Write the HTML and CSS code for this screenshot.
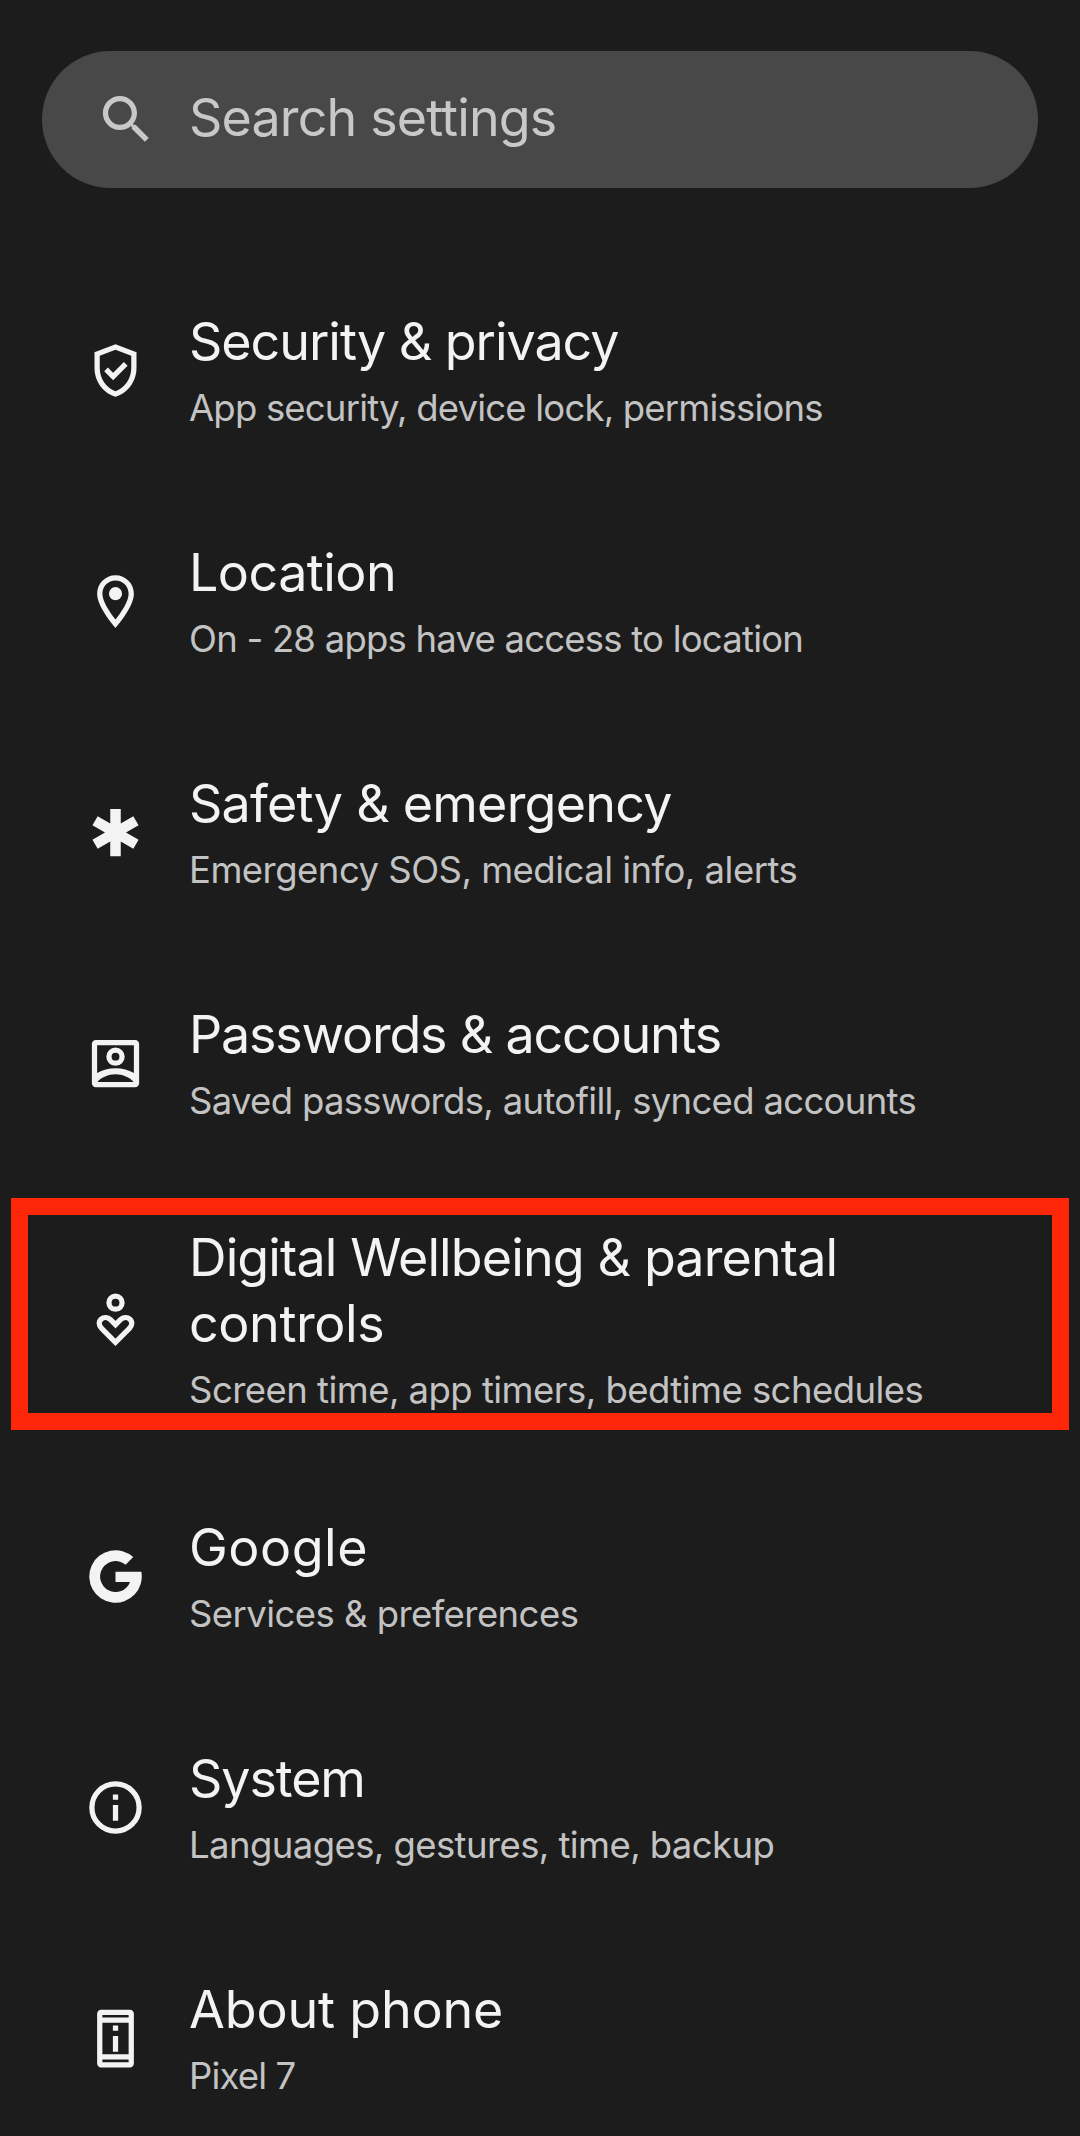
FILE: index.html
```html
<!DOCTYPE html>
<html lang="en">
<head>
<meta charset="utf-8">
<title>Settings</title>
<link rel="stylesheet" href="styles.css">
</head>
<body>
<main class="screen">
  <div class="search" role="search">
    <svg class="icon" viewBox="0 0 24 24"><path d="M15.5 14h-.79l-.28-.27C15.41 12.59 16 11.11 16 9.5 16 5.91 13.09 3 9.5 3S3 5.91 3 9.5 5.91 16 9.5 16c1.61 0 3.09-.59 4.23-1.57l.27.28v.79l5 4.99L20.49 19l-4.99-5zm-6 0C7.01 14 5 11.99 5 9.5S7.01 5 9.5 5 14 7.01 14 9.5 11.99 14 9.5 14z"/></svg>
    <span class="search-label">Search settings</span>
  </div>

  <ul class="list">
    <li class="row security">
      <svg class="icon" viewBox="0 0 24 24"><path d="M12 2L4 5v6.09c0 5.05 3.41 9.76 8 10.91 4.59-1.15 8-5.86 8-10.91V5l-8-3zm6 9.09c0 4-2.55 7.7-6 8.83-3.45-1.13-6-4.82-6-8.83v-4.7l6-2.25 6 2.25v4.7z"/><path class="line" d="M8.4 11.6l2.7 2.7 4.8-4.8"/></svg>
      <div class="text"><div class="title">Security &amp; privacy</div><div class="summary">App security, device lock, permissions</div></div>
    </li>
    <li class="row location">
      <svg class="icon" viewBox="0 0 24 24"><path d="M12 2C8.13 2 5 5.13 5 9c0 5.25 7 13 7 13s7-7.75 7-13c0-3.87-3.13-7-7-7zM7 9c0-2.76 2.24-5 5-5s5 2.24 5 5c0 2.88-2.88 7.19-5 9.88C9.92 16.21 7 11.85 7 9z"/><circle cx="12" cy="9" r="2.5"/></svg>
      <div class="text"><div class="title">Location</div><div class="summary">On - 28 apps have access to location</div></div>
    </li>
    <li class="row safety">
      <svg class="icon" viewBox="0 0 24 24"><path d="M20.79 9.23l-2-3.46L14 8.54V3h-4v5.54L5.21 5.77l-2 3.46L8 12l-4.79 2.77 2 3.46L10 15.46V21h4v-5.54l4.79 2.77 2-3.46L16 12z"/></svg>
      <div class="text"><div class="title">Safety &amp; emergency</div><div class="summary">Emergency SOS, medical info, alerts</div></div>
    </li>
    <li class="row passwords">
      <svg class="icon" viewBox="0 0 24 24"><path fill-rule="evenodd" d="M4.5 3h15c.83 0 1.5.67 1.5 1.5v15c0 .83-.67 1.5-1.5 1.5h-15c-.83 0-1.5-.67-1.5-1.5v-15C3 3.67 3.67 3 4.5 3zM5 5v10.6c2-1.1 4.4-1.8 7-1.8s5 .7 7 1.8V5zM5.1 19h13.800c-1.5-1.7-4.1-2.9-6.9-2.9s-5.4 1.2-6.9 2.9z"/><circle class="line" cx="12" cy="9.4" r="2.5"/></svg>
      <div class="text"><div class="title">Passwords &amp; accounts</div><div class="summary">Saved passwords, autofill, synced accounts</div></div>
    </li>
    <li class="row wellbeing">
      <svg class="icon" viewBox="0 0 24 24"><circle class="line" cx="12" cy="5.2" r="2.5"/><path class="line" d="M12 20.3L6.700 15C5.600 13.900 5.500 12.400 6.500 11.500c1-.9 2.600-.8 3.600.2L12 13.600l1.900-1.900c1-1 2.600-1.100 3.600-.2 1 .9.900 2.400-.2 3.500z"/></svg>
      <div class="text"><div class="title"><span class="title-lead">Digital Wellbeing &amp; parental</span> <span>controls</span></div><div class="summary">Screen time, app timers, bedtime schedules</div></div>
      <div class="highlight"></div>
    </li>
    <li class="row google">
      <svg class="icon" viewBox="0 0 24 24"><path d="M18.75 4.6A10 10 0 1 0 21.85 10.2H12V14.100H17.550A5.900 5.900 0 1 1 15.850 7.500z"/></svg>
      <div class="text"><div class="title">Google</div><div class="summary">Services &amp; preferences</div></div>
    </li>
    <li class="row system">
      <svg class="icon" viewBox="0 0 24 24"><path d="M11 7h2v2h-2zM11 11h2v6h-2z"/><circle class="line" cx="12" cy="12" r="9"/></svg>
      <div class="text"><div class="title">System</div><div class="summary">Languages, gestures, time, backup</div></div>
    </li>
    <li class="row about">
      <svg class="icon" viewBox="0 0 24 24"><path fill-rule="evenodd" d="M6.5 1h11c.83 0 1.5.67 1.5 1.5v19c0 .83-.67 1.5-1.5 1.5h-11C5.67 23 5 22.330 5 21.500v-19C5 1.670 5.670 1 6.500 1zM7 3v1h10V3zM7 6v12h10V6zM7 20v1h10v-1zM11 7h2v2h-2zM11 11h2v6h-2z"/></svg>
      <div class="text"><div class="title">About phone</div><div class="summary">Pixel 7</div></div>
    </li>
  </ul>
</main>
</body>
</html>
```
FILE: styles.css
```css
* { box-sizing: border-box; }

body {
  margin: 0;
  background: #1c1c1c;
  font-family: "Inter", "Liberation Sans", sans-serif;
}

.screen {
  height: 2136px;
  padding-top: 51px;
  overflow: hidden;
}

.search {
  display: flex;
  align-items: center;
  height: 137px;
  margin: 0 42px;
  padding-left: 53px;
  border-radius: 69px;
  background: #484848;
  color: #c8c8c8;
}

.search-label {
  margin-left: 31px;
  padding-bottom: 3px;
  font-size: 52px;
  line-height: 66px;
  letter-spacing: -0.86px;
}

.icon {
  flex: none;
  display: block;
  width: 63px;
  height: 63px;
  fill: currentColor;
}

.line {
  fill: none;
  stroke: currentColor;
  stroke-width: 2;
}

.list {
  margin: 67px 0 0;
  padding: 0;
  list-style: none;
}

.row {
  position: relative;
  display: flex;
  align-items: center;
  min-height: 231px;
  padding: 45px 84px;
  color: #f3f3f3;
}

.text { margin-left: 42px; }

.title {
  font-size: 52px;
  line-height: 66px;
}

.title span { display: block; }

.summary {
  margin-top: 9px;
  font-size: 36.5px;
  line-height: 49px;
  color: #c3c3c3;
  white-space: nowrap;
}

.wellbeing { height: 282px; }

.highlight {
  position: absolute;
  top: 19px;
  left: 11px;
  width: 1058px;
  height: 232px;
  border: 17px solid #fe2709;
}

.security .title { letter-spacing: -1.03px; }
.security .summary { letter-spacing: -0.81px; }
.location .title { letter-spacing: -0.54px; }
.location .summary { letter-spacing: -0.78px; }
.safety .title { letter-spacing: -0.759px; }
.safety .summary { letter-spacing: -0.523px; }
.passwords .title { letter-spacing: -1.2px; }
.passwords .summary { letter-spacing: -0.69px; }
.wellbeing .title { letter-spacing: -0.4px; }
.wellbeing .title-lead { letter-spacing: -0.88px; }
.wellbeing .summary { letter-spacing: -0.54px; }
.google .title { letter-spacing: 0.5px; }
.google .summary { letter-spacing: -0.56px; }
.system .title { letter-spacing: -1.1px; }
.system .summary { letter-spacing: -0.587px; }
.about .title { letter-spacing: -0.17px; }
.about .summary { letter-spacing: -0.85px; }
```
